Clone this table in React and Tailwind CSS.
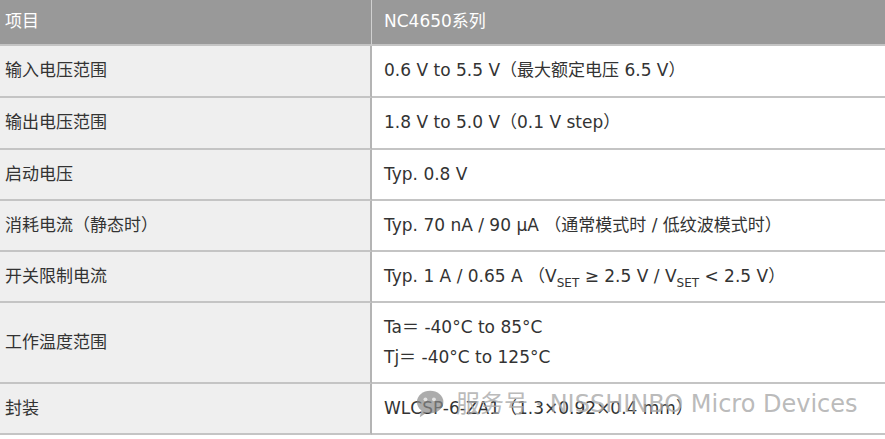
import React from "react";

const sub = <sub className="text-[12px] align-[-2px]">SET</sub>;

const rows = [
  { k: "输入电压范围", v: "0.6 V to 5.5 V（最大额定电压 6.5 V）", h: "h-[52px]" },
  { k: "输出电压范围", v: "1.8 V to 5.0 V（0.1 V step）", h: "h-[52px]" },
  { k: "启动电压", v: "Typ. 0.8 V", h: "h-[51px]" },
  { k: "消耗电流（静态时）", v: "Typ. 70 nA / 90 μA （通常模式时 / 低纹波模式时）", h: "h-[51px]" },
  {
    k: "开关限制电流",
    v: (
      <span>
        Typ. 1 A / 0.65 A （V{sub} ≥ 2.5 V / V{sub} &lt; 2.5 V）
      </span>
    ),
    h: "h-[51px]",
  },
  {
    k: "工作温度范围",
    v: (
      <div className="flex flex-col gap-[4px]">
        <span>Ta＝ -40°C to 85°C</span>
        <span>Tj＝ -40°C to 125°C</span>
      </div>
    ),
    h: "h-[81px]",
  },
  { k: "封装", v: "WLCSP-6-ZA1（1.3×0.92×0.4 mm）", h: "h-[51px]" },
];

export default function App() {
  return (
    <div
      className="relative w-[885px] h-[439px] bg-white text-[17px] text-[#333]"
      style={{ fontFamily: '"DejaVu Sans", "Noto Sans CJK SC", sans-serif' }}
    >
      <div className="grid grid-cols-[372px_1fr]">
        <div className="h-[46px] bg-[#999] text-white flex items-center pl-[5px] border-r border-[#d0d0d0] border-b-2 border-b-[#c4c4c4]">
          项目
        </div>
        <div className="h-[46px] bg-[#999] text-white flex items-center pl-[12px] border-b-2 border-b-[#c4c4c4]">
          NC4650系列
        </div>
        {rows.map((r, i) => (
          <React.Fragment key={i}>
            <div
              className={`${r.h} bg-[#efefef] flex items-center pl-[5px] border-r-2 border-r-[#b4b4b4] border-b-2 border-b-[#c4c4c4]`}
            >
              {r.k}
            </div>
            <div className={`${r.h} bg-white flex items-center pl-[12px] border-b-2 border-b-[#c4c4c4]`}>
              {r.v}
            </div>
          </React.Fragment>
        ))}
      </div>

      {/* watermark overlay */}
      <div className="absolute left-[416px] top-[386px] flex items-center text-[24px] text-[#a8a8a8]/80 pointer-events-none">
        <svg width="34" height="32" viewBox="0 0 36 32" className="opacity-70 mr-[6px]">
          <ellipse cx="15" cy="14" rx="14" ry="12" fill="#8a8a8a" />
          <path d="M6 22 L4 30 L13 24 Z" fill="#8a8a8a" />
          <circle cx="10" cy="11" r="2" fill="#d8d8d8" />
          <circle cx="19" cy="11" r="2" fill="#d8d8d8" />
        </svg>
        <span>服务号</span>
        <span className="mx-[7px]">·</span>
        <span>NISSHINBO Micro Devices</span>
      </div>
    </div>
  );
}
